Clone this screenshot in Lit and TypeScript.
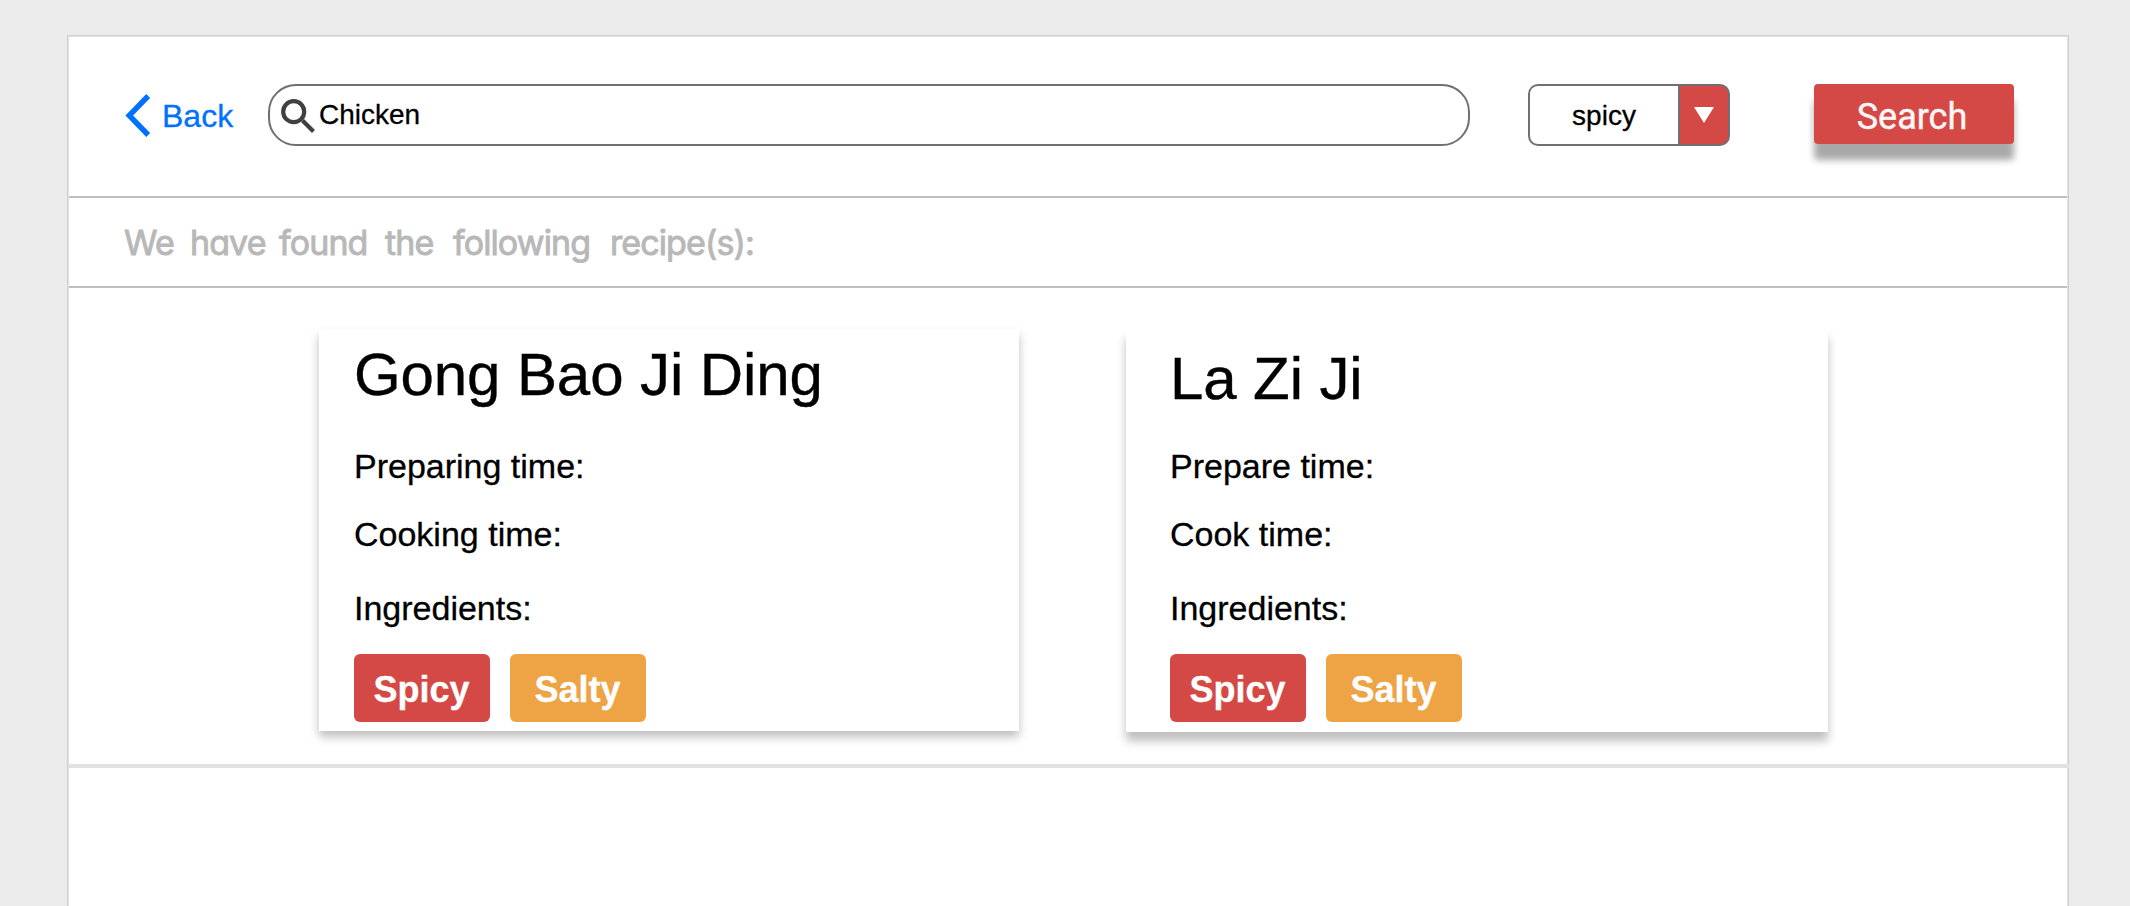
import { LitElement, html, css } from "lit";
import { customElement, property } from "lit/decorators.js";

@customElement("recipe-card")
class RecipeCard extends LitElement {
  @property() name = "";
  @property() prep = "";
  @property() cook = "";

  static styles = css`
    :host { display: block; box-sizing: border-box; color: #000; background: #fff; }
    .title { margin: 0; font-size: 60px; line-height: 68px; font-weight: 400; white-space: nowrap; letter-spacing: -0.1px; -webkit-text-stroke: 0.4px #000; }
    .line { margin: 0; font-size: 34px; line-height: 40px; white-space: nowrap; -webkit-text-stroke: 0.3px #000; }
    .prep { margin-top: var(--title-gap, 38px); }
    .cook { margin-top: 28px; }
    .ingredients { margin-top: 34px; }
    .tags { display: flex; gap: 20px; margin-top: 26px; }
    .tag {
      width: 136px; height: 68px; line-height: 71px; border-radius: 6px; text-indent: -1px;
      text-align: center; font-size: 36px; font-weight: 700; color: #fff;
      -webkit-text-stroke: 0.3px #fff;
    }
    .spicy { background: #d44945; }
    .salty { background: #eea345; }
  `;

  render() {
    return html`
      <h2 class="title">${this.name}</h2>
      <p class="line prep">${this.prep}</p>
      <p class="line cook">${this.cook}</p>
      <p class="line ingredients">Ingredients:</p>
      <div class="tags">
        <div class="tag spicy">Spicy</div>
        <div class="tag salty">Salty</div>
      </div>
    `;
  }
}

@customElement("app-root")
class AppRoot extends LitElement {
  static styles = css`
    :host {
      display: block; box-sizing: border-box; height: 906px; overflow: hidden;
      padding: 35px 61px 0 67px; background: #ebebeb;
      font-family: "Liberation Sans", Arial, sans-serif;
    }
    .panel {
      box-sizing: border-box; height: 900px; background: #fff;
      border: 1px solid #d0d0d0; outline: 1px solid #e2e2e2; outline-offset: -2px;
      padding: 1px 0 0 1px;
    }
    .toolbar {
      display: flex; align-items: flex-start; box-sizing: border-box; height: 161px;
      padding: 47px 0 0 56px; margin-right: -1px; border-bottom: 2px solid #bfbfbf;
    }
    .back { display: flex; align-items: center; width: 143px; height: 62px; color: #0070ff; }
    .chevron { width: 26px; height: 44px; margin-right: 11px; flex: none; }
    .back-label { font-size: 32px; line-height: 36px; padding-top: 2px; -webkit-text-stroke: 0.3px #0070ff; }
    .field {
      display: flex; align-items: center; box-sizing: border-box; width: 1202px; height: 62px;
      border: 2px solid #707070; border-radius: 28px; padding-left: 9px;
      font-size: 28px; color: #000; -webkit-text-stroke: 0.3px #000;
    }
    .lens { width: 36px; height: 36px; margin: 0 4px 0 0; flex: none; }
    .select {
      display: flex; box-sizing: border-box; width: 202px; height: 62px; margin-left: 58px;
      border: 2px solid #707070; border-radius: 10px; overflow: hidden; background: #d44945;
    }
    .value {
      width: 148px; line-height: 59px; text-align: center; font-size: 28px; color: #000;
      background: #fff; border-right: 2px solid #707070; -webkit-text-stroke: 0.3px #000;
    }
    .arrow { flex: 1; display: flex; }
    .arrow svg { width: 20px; height: 16px; margin: 21px 0 0 14px; }
    .search {
      width: 200px; height: 60px; margin-left: 84px; border-radius: 4px; background: #d44945;
      box-shadow: 0 16px 7px rgba(0, 0, 0, 0.34); color: #fbf6f6; text-align: center;
      font: 400 36px/66px Roboto, sans-serif; text-indent: -4px; -webkit-text-stroke: 0.4px #fbf6f6;
    }
    .message {
      display: grid; grid-template-columns: 66px 89px 106px 68px 157px auto;
      box-sizing: border-box; height: 90px; margin: 0 -1px 0 0; padding-left: 55px;
      border-bottom: 2px solid #bfbfbf; color: #b8b8b8; white-space: pre;
      font: 400 34px/89px Inter, sans-serif; font-feature-settings: "cv11" 1;
      letter-spacing: -0.9px; -webkit-text-stroke: 0.9px #b8b8b8; stroke-linejoin: round;
    }
    .results {
      display: flex; align-items: flex-start; box-sizing: border-box; height: 480px;
      padding: 41px 0 0 250px; margin-right: -1px; border-bottom: 4px solid #e2e2e2;
    }
    .first {
      width: 700px; height: 402px; padding: 12px 0 0 35px; --title-gap: 37px;
      box-shadow: 0 6px 9px rgba(0, 0, 0, 0.25);
    }
    .second {
      width: 702px; height: 403px; margin-left: 107px; padding: 16px 0 0 44px;
      --title-gap: 33px; box-shadow: 0 9px 9px rgba(0, 0, 0, 0.25);
    }
  `;

  private words = ["We ", "have ", "found ", "the ", "following ", "recipe(s):"];

  render() {
    return html`
      <main class="panel">
        <header class="toolbar">
          <div class="back">
            <svg class="chevron" viewBox="0 0 26 44" fill="none" stroke="#0070ff" stroke-width="5.4">
              <path d="M23.2 3 L4.2 22.5 L23.2 42" />
            </svg>
            <span class="back-label">Back</span>
          </div>
          <div class="field">
            <svg class="lens" viewBox="0 0 36 36" fill="none" stroke="#404040" stroke-width="4.2">
              <circle cx="14.7" cy="14.7" r="10.5" />
              <path d="M23.5 23.5 L34.5 34.5" />
            </svg>
            <span>Chicken</span>
          </div>
          <div class="select">
            <div class="value">spicy</div>
            <div class="arrow">
              <svg viewBox="0 0 20 16"><path d="M0 0H20L10 16Z" fill="#fff" /></svg>
            </div>
          </div>
          <div class="search">Search</div>
        </header>
        <p class="message">${this.words.map((word) => html`<span>${word}</span>`)}</p>
        <section class="results">
          <recipe-card class="first" name="Gong Bao Ji Ding" prep="Preparing time:" cook="Cooking time:"></recipe-card>
          <recipe-card class="second" name="La Zi Ji" prep="Prepare time:" cook="Cook time:"></recipe-card>
        </section>
      </main>
    `;
  }
}
